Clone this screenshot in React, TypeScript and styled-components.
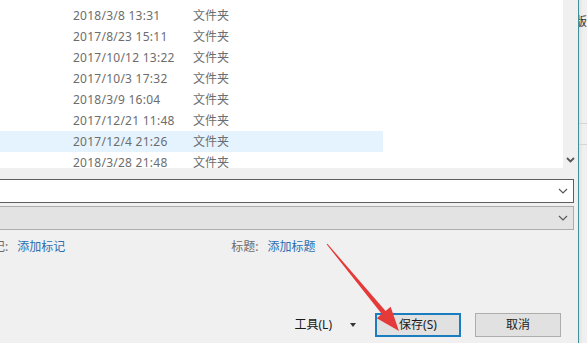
import React from "react";
import styled, { createGlobalStyle } from "styled-components";

const Global = createGlobalStyle`
  html, body { margin: 0; padding: 0; background: #f0f0f0; overflow: hidden; }
  body { font-family: "Noto Sans", "Noto Sans CJK SC", sans-serif; font-size: 12px; }
`;

const Screen = styled.div`
  position: relative;
  width: 587px;
  height: 343px;
  display: flex;
  overflow: hidden;
  background: #f0f0f0;
`;

const Dialog = styled.div`
  width: 578px;
  height: 343px;
  border-right: 1px solid #3f8f96;
  display: flex;
  flex-direction: column;
  background: #f0f0f0;
`;

const SideStrip = styled.div`
  flex: 1;
  background: linear-gradient(90deg, #e2e2e2, #f0f0f0 4px);
  display: flex;
  flex-direction: column;
  overflow: hidden;
`;

const SideText = styled.div`
  height: 124px;
  padding-top: 15px;
  box-sizing: border-box;
  font-size: 12px;
  line-height: 14px;
  color: #333;
  white-space: nowrap;
  margin-left: -4px;
  border-bottom: 1px solid #d6d6d6;
`;

const SideCell = styled.div`
  height: 20px;
  border-bottom: 1px solid #d6d6d6;
`;

const ListSection = styled.div`
  height: 168px;
  display: flex;
`;

const ListBody = styled.div`
  flex: 1;
  background: #fff;
  overflow: hidden;
  padding-top: 5px;
`;

const Scrollbar = styled.div`
  width: 15px;
  background: #f0f0f0;
  display: flex;
  flex-direction: column;
  justify-content: flex-end;
  align-items: center;
  padding-bottom: 5px;
  box-sizing: border-box;
`;

const Row = styled.div<{ $hl?: boolean; $partial?: boolean }>`
  width: 383px;
  height: 21px;
  display: grid;
  grid-template-columns: 73px 120px 1fr;
  align-items: center;
  background: ${(p) => (p.$hl ? "#e5f3ff" : "transparent")};
  margin-top: ${(p) => (p.$partial ? "-21px" : "0")};
  color: #6d6d6d;
  font-size: 12px;
  line-height: 21px;
  white-space: nowrap;
`;

const DateCell = styled.span`
  grid-column: 2;
  letter-spacing: 0.25px;
`;

const TypeCell = styled.span`
  grid-column: 3;
`;

const Form = styled.div`
  display: flex;
  flex-direction: column;
  padding: 11px 4px 0 0;
  margin-left: -2px;
`;

const Combo = styled.div<{ $filled?: boolean }>`
  height: 24px;
  box-sizing: border-box;
  border: 1px solid ${(p) => (p.$filled ? "#acacac" : "#5e5e5e")};
  background: ${(p) => (p.$filled ? "#e3e3e3" : "#fff")};
  display: flex;
  align-items: center;
  justify-content: flex-end;
  padding-right: 5px;
  & + & { margin-top: 3px; }
`;

const MetaRow = styled.div`
  margin-top: 9px;
  height: 16px;
  display: flex;
  align-items: center;
  font-size: 12px;
  line-height: 16px;
  white-space: nowrap;
`;

const MetaLabel = styled.span<{ $offset: number }>`
  color: #6d6d6d;
  margin-left: ${(p) => p.$offset}px;
`;

const MetaLink = styled.span`
  color: #2a6fb2;
  margin-left: 9px;
`;

const ButtonRow = styled.div`
  margin-top: auto;
  margin-bottom: 6px;
  height: 24px;
  display: flex;
  align-items: center;
  justify-content: flex-end;
  padding-right: 17px;
`;

const ToolsLabel = styled.span`
  color: #1a1a1a;
  font-size: 12px;
  line-height: 16px;
`;

const DropArrow = styled.span`
  margin-left: 18px;
  margin-right: 19px;
  width: 0;
  height: 0;
  border-left: 3.5px solid transparent;
  border-right: 3.5px solid transparent;
  border-top: 4px solid #333;
`;

const Button = styled.div<{ $primary?: boolean }>`
  width: 86px;
  height: 24px;
  box-sizing: border-box;
  border: ${(p) => (p.$primary ? "2px solid #1b7cc0" : "1px solid #adadad")};
  background: #e1e1e1;
  display: flex;
  align-items: center;
  justify-content: center;
  color: #1a1a1a;
  font-size: 12px;
  line-height: 16px;
  & + & { margin-left: 14px; }
`;

const Overlay = styled.svg`
  position: absolute;
  left: 0;
  top: 0;
  pointer-events: none;
`;

const Chevron = ({ color = "#555" }: { color?: string }) => (
  <svg width="10" height="6" viewBox="0 0 10 6">
    <path d="M1 1 L5 5 L9 1" fill="none" stroke={color} strokeWidth="1.1" />
  </svg>
);

const ScrollChevron = () => (
  <svg width="9" height="6" viewBox="0 0 9 6">
    <path d="M1 1 L4.5 4.5 L8 1" fill="none" stroke="#555" strokeWidth="1.8" />
  </svg>
);

const rows = [
  ["2017/9/18 10:25", "文件夹"],
  ["2018/3/8 13:31", "文件夹"],
  ["2017/8/23 15:11", "文件夹"],
  ["2017/10/12 13:22", "文件夹"],
  ["2017/10/3 17:32", "文件夹"],
  ["2018/3/9 16:04", "文件夹"],
  ["2017/12/21 11:48", "文件夹"],
  ["2017/12/4 21:26", "文件夹"],
  ["2018/3/28 21:48", "文件夹"],
];

export default function App() {
  return (
    <>
      <Global />
      <Screen>
        <Dialog>
          <ListSection>
            <ListBody>
              {rows.map(([d, t], i) => (
                <Row key={i} $partial={i === 0} $hl={i === 7}>
                  <DateCell>{d}</DateCell>
                  <TypeCell>{t}</TypeCell>
                </Row>
              ))}
            </ListBody>
            <Scrollbar>
              <ScrollChevron />
            </Scrollbar>
          </ListSection>
          <Form>
            <Combo>
              <Chevron />
            </Combo>
            <Combo $filled>
              <Chevron />
            </Combo>
            <MetaRow>
              <MetaLabel $offset={-17}>标记:</MetaLabel>
              <MetaLink>添加标记</MetaLink>
              <MetaLabel $offset={166}>标题:</MetaLabel>
              <MetaLink>添加标题</MetaLink>
            </MetaRow>
          </Form>
          <ButtonRow>
            <ToolsLabel>工具(L)</ToolsLabel>
            <DropArrow />
            <Button $primary>保存(S)</Button>
            <Button>取消</Button>
          </ButtonRow>
        </Dialog>
        <SideStrip>
          <SideText>版本</SideText>
          <SideCell />
        </SideStrip>
        <Overlay width="587" height="343" viewBox="0 0 587 343">
          <polygon
            points="326.6,244.3 381.8,314.1 376.8,318.2 399,331 390.6,306.8 385.6,310.9 327.4,243.7"
            fill="#e53a3a"
          />
        </Overlay>
      </Screen>
    </>
  );
}
